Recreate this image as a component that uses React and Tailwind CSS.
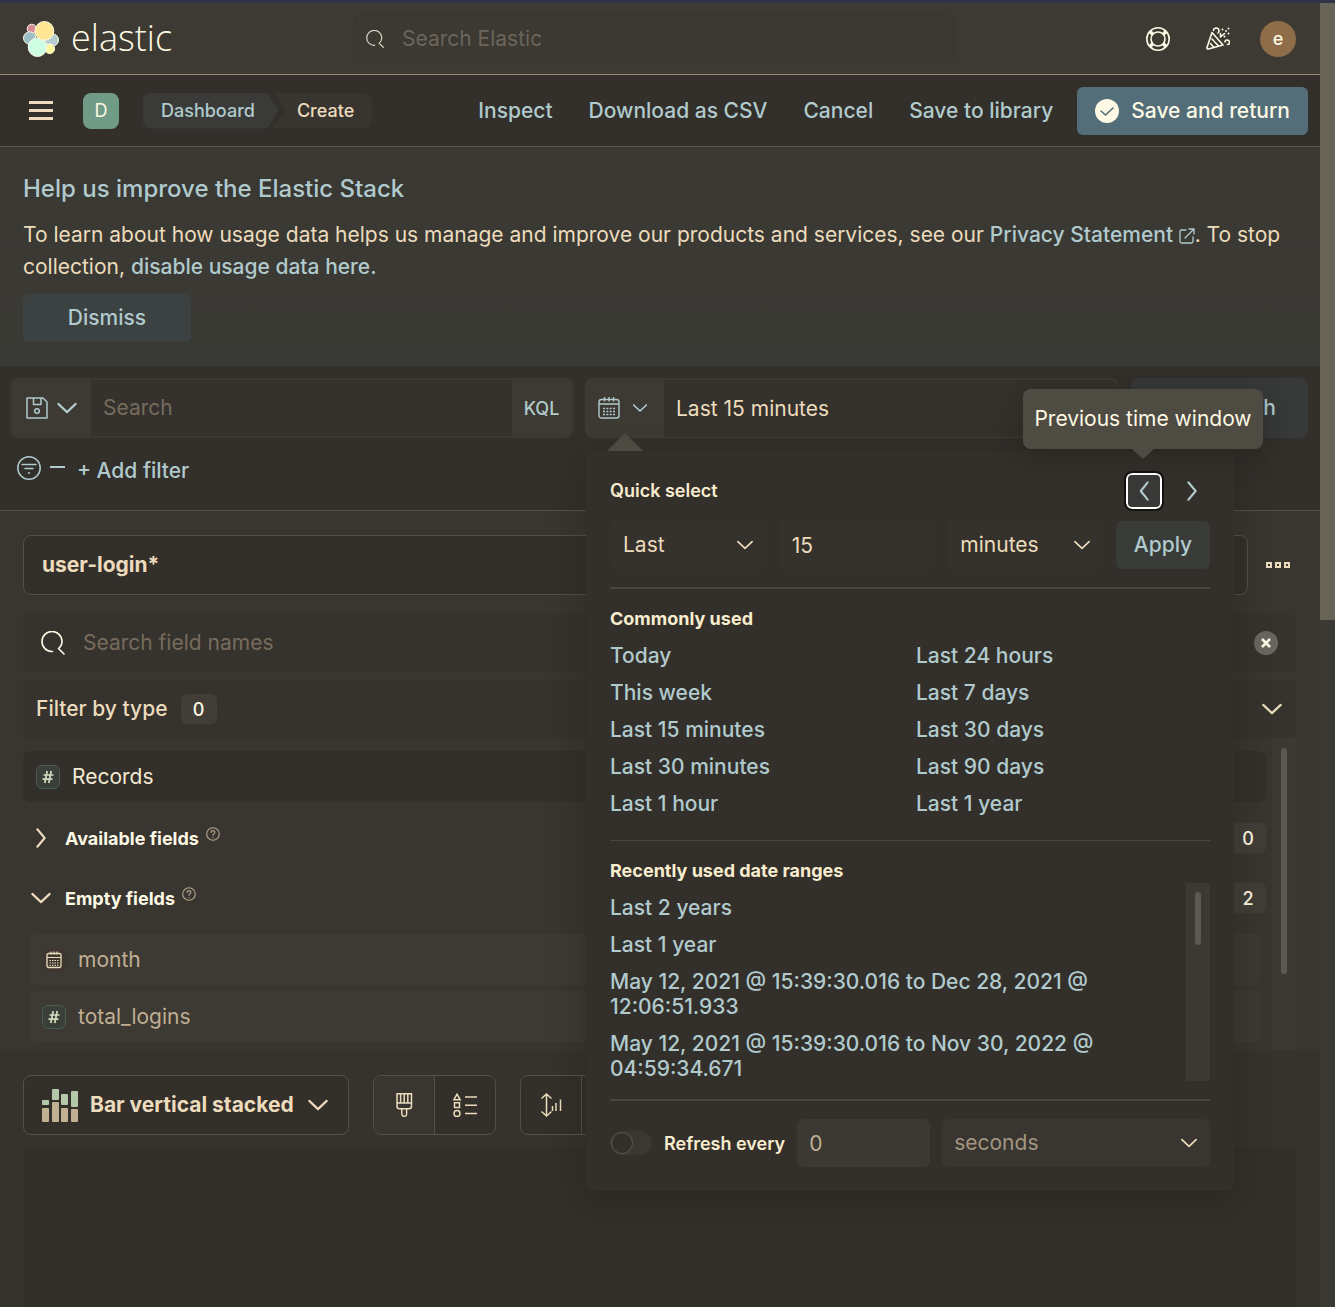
import React from "react";

const INK = "fill-none stroke-current";

function Chevron({ dir = "down", className = "size-4", width = 2.3 }) {
  const d = {
    down: "M2.500 7.500l9.500 9 9.500-9",
    left: "M16 2.500L8.500 12l7.500 9.500",
    right: "M8 2.500l8 9.500-8 9.500",
  }[dir];
  return (
    <svg viewBox="0 0 24 24" className={`${INK} shrink-0 ${className}`} strokeWidth={width} strokeLinecap="round" strokeLinejoin="round" aria-hidden="true">
      <path d={d} />
    </svg>
  );
}

function SearchIcon({ className }) {
  return (
    <svg viewBox="0 0 24 24" className={`${INK} shrink-0 ${className}`} strokeWidth="1.6" strokeLinecap="round" strokeLinejoin="round" aria-hidden="true">
      <path d="M11.500 20.500H11a10 10 0 1 1 10-10c0 3-1 5-3.500 7l5.500 5.500" />
    </svg>
  );
}

function CalendarIcon({ className }) {
  return (
    <svg viewBox="0 0 22 22" className={`${INK} shrink-0 ${className}`} strokeWidth="1.400" aria-hidden="true">
      <rect x="1" y="2.500" width="20" height="18.500" rx="2.500" />
      <path d="M1 7h20M6.500 0v4.500M11 0v4.500M15.500 0v4.500" />
      <path d="M5 11.500h12M5 14.500h12M5 17.500h12" strokeWidth="1.600" strokeDasharray="2 1.330" />
    </svg>
  );
}

function SmallCalendarIcon() {
  return (
    <svg viewBox="0 0 16 18" className={`${INK} h-[18px] w-4`} aria-hidden="true">
      <rect x="1" y="2.500" width="14" height="14" rx="1.500" strokeWidth="1.300" />
      <path d="M1 6.500h14M5 .5v3M8 .5v3M11 .5v3" strokeWidth="1.200" />
      <path d="M3.500 9.500h9M3.500 12h9M3.500 14.300h9" strokeWidth="1" strokeDasharray="1.500 1" />
    </svg>
  );
}

function ElasticMark() {
  return (
    <svg viewBox="0 0 36 36" className="size-9" stroke="#fdf9e4" strokeWidth="1" aria-hidden="true">
      <circle cx="8.800" cy="7.800" r="4.600" fill="#d58b95" />
      <circle cx="6.700" cy="17" r="6.200" fill="#9bbfc5" />
      <circle cx="29.300" cy="19" r="6.200" fill="#b5ccd2" />
      <circle cx="26.800" cy="27.800" r="4.800" fill="#fff79c" />
      <path d="M13 21L19 15l6 5-2 6z" fill="#b5ccd2" stroke="none" />
      <circle cx="14.500" cy="26.200" r="9.300" fill="#cdfde2" />
      <circle cx="21.400" cy="9.900" r="9.400" fill="#ffe694" />
    </svg>
  );
}

function HelpIcon() {
  return (
    <svg viewBox="0 0 24 24" className={`${INK} size-6`} strokeWidth="1.600" aria-hidden="true">
      <circle cx="12" cy="12" r="11.200" />
      <circle cx="12" cy="12" r="7" />
      <path d="M4 4.500l3 3M20 4.500l-3 3M4 19.500l3-3M20 19.500l-3-3" strokeWidth="3.500" />
    </svg>
  );
}

function PartyIcon() {
  return (
    <svg viewBox="0 0 24 24" className={`${INK} size-6`} strokeWidth="1.600" strokeLinecap="round" strokeLinejoin="round" aria-hidden="true">
      <path d="M6 5.500L1 20.500c-.3 1 .5 1.700 1.300 1.500L17 18z" />
      <path d="M6 12l6.500 7M4.500 16.500l3.500 4" />
      <path d="M7.500 3.500c0-3.500 5.500-3.500 5.500.5 0 1-.5 1.500-1 2M14.500 10l4-3.500M14.500 9.500V6.500M19 15c0-3 4.500-2.500 4.500.5 0 1.500-1 2-2 2" />
      <path d="M16.500 2.500v.1M20 4v.1M22.500 1.500v.1M22.500 6.500v.1M18.500 9.500v.1" strokeWidth="1.900" />
    </svg>
  );
}

function QuestionIcon() {
  return (
    <svg viewBox="0 0 16 16" className={`${INK} mb-2 size-3.5 text-[#b5a58c]`} strokeWidth="1.300" strokeLinecap="round" aria-hidden="true">
      <circle cx="8" cy="8" r="7.200" />
      <path d="M5.800 6.200C5.800 3.300 10.300 3.500 10.200 6.200 10.100 7.500 8 7.800 8 9.500M8 12v.2" />
    </svg>
  );
}

function NumberToken() {
  return (
    <span className="flex size-6 items-center justify-center rounded-md border border-[#4b5c51] bg-[#3a4039]">
      <svg viewBox="0 0 12 14" className={`${INK} h-3.5 w-3 text-[#cfdcbe]`} strokeWidth="1.700" aria-hidden="true">
        <path d="M5.200 1L2.800 13M9.200 1L6.800 13M1.500 5h10M.5 9.200h10" />
      </svg>
    </span>
  );
}

function StackedBarsIcon() {
  const cols = [
    [0, 11, 5, 19, 14],
    [10, 0, 11, 13, 20],
    [19, 5, 11, 19, 14],
    [29, 2, 16, 20, 13],
  ];
  return (
    <svg viewBox="0 0 36 33" className="h-[33px] w-9" aria-hidden="true">
      {cols.map(([x, y, h, y2, h2]) => (
        <g key={x}>
          <rect x={x} y={y} width="7" height={h} rx="1" fill="#b3c7a9" />
          <rect x={x} y={y2} width="7" height={h2} rx="1" fill="#c2b093" />
        </g>
      ))}
    </svg>
  );
}

function Header() {
  return (
    <header className="flex h-[72px] items-center border-b border-[#9c8a70] bg-[#3d3933] pl-[23px] pr-6">
      <a href="#home" className="flex w-[331px] shrink-0 items-center gap-3" aria-label="elastic">
        <ElasticMark />
        <span className="pb-0.5 font-['Open_Sans',sans-serif] text-[36px] font-light leading-9 text-[#fdf9e4]">elastic</span>
      </a>
      <label className="flex h-12 w-[600px] shrink-0 items-center rounded-md border border-[#393631] bg-[#3c3832] pl-[11px]">
        <SearchIcon className="size-[18px] text-[#d8d2c0]" />
        <input aria-label="Search Elastic" placeholder="Search Elastic" className="ml-[18px] min-w-0 flex-1 bg-transparent text-[21px] outline-none placeholder:text-[#6b655a]" />
      </label>
      <div className="ml-auto flex items-center text-[#fdf9e4]">
        <button className="mr-9" aria-label="Help"><HelpIcon /></button>
        <button className="mr-[30px]" aria-label="What's new"><PartyIcon /></button>
        <button className="size-9 rounded-full bg-[#8e6d48] text-[18px] font-medium leading-9">e</button>
      </div>
    </header>
  );
}

function NavBar() {
  return (
    <nav className="flex h-[72px] items-center border-b border-[#5c574f] bg-[#332f2a] pl-[29px] pr-3">
      <button aria-label="Menu" className="flex w-6 flex-col gap-[5px]">
        <span className="h-[3px] bg-[#ecdcbd]" />
        <span className="h-[3px] bg-[#ecdcbd]" />
        <span className="h-[3px] bg-[#ecdcbd]" />
      </button>
      <button className="ml-[30px] size-9 rounded-lg bg-[#6f9b87] text-[18px] text-[#fdf9e4]">D</button>
      <ol className="ml-6 flex text-[18px] font-medium leading-9">
        <li className="rounded-l-lg bg-[#3a3b39] pl-[18px] pr-6 text-[#b0cacd] [clip-path:polygon(0_0,calc(100%_-_12px)_0,100%_50%,calc(100%_-_12px)_100%,0_100%)]">
          <a href="#dashboard">Dashboard</a>
        </li>
        <li className="-ml-1.5 rounded-r-lg bg-[#38342f] pl-6 pr-[18px] text-[#ecdcbd] [clip-path:polygon(0_0,100%_0,100%_100%,0_100%,12px_50%)]">Create</li>
      </ol>
      <div className="ml-auto flex items-center gap-9 text-[21px] font-medium text-[#b0cacd]">
        <a href="#inspect">Inspect</a>
        <a href="#csv">Download as CSV</a>
        <a href="#cancel">Cancel</a>
        <a href="#library">Save to library</a>
        <button className="-ml-3 flex h-12 items-center gap-3 rounded-md bg-[#536d79] px-[18px] text-[#fdf9e4]">
          <svg viewBox="0 0 24 24" className="size-6" aria-hidden="true">
            <circle cx="12" cy="12" r="12" fill="#fdf9e4" />
            <path d="M6 12l4.500 4L18 9" fill="none" stroke="#536d79" strokeWidth="1.600" strokeLinecap="round" />
          </svg>
          Save and return
        </button>
      </div>
    </nav>
  );
}

function Notice() {
  return (
    <section className="flex flex-col items-start bg-gradient-to-b from-[#3a3833] via-[#3b3934] to-[#3a3a35] px-[23px] pb-6 pt-[25px]">
      <h2 className="text-[24px] font-medium leading-[34px] text-[#b0cacd]">Help us improve the Elastic Stack</h2>
      <p className="mt-[13px] text-[21px] leading-8 text-[#ecdcbd]">
        To learn about how usage data helps us manage and improve our products and services, see our{" "}
        <a href="#privacy" className="whitespace-nowrap font-medium text-[#b0cacd]">
          Privacy Statement{" "}
          <svg viewBox="0 0 16 16" className={`${INK} inline size-4`} strokeWidth="1.300" strokeLinecap="round" aria-hidden="true">
            <path d="M7 2H2.500Q1 2 1 3.500v10Q1 15 2.500 15h10q1.500 0 1.500-1.500V9M10 1h5v5M15 1L6 10" />
          </svg>
        </a>
        . To stop collection, <a href="#usage" className="font-medium text-[#b0cacd]">disable usage data here.</a>
      </p>
      <button className="mt-[11px] h-12 w-[168px] rounded-md bg-[#3c4141] text-[21px] font-medium text-[#b0cacd]">Dismiss</button>
    </section>
  );
}

function QueryBar() {
  return (
    <section className="h-[145px] border-b border-[#53504b] bg-[#332f2a] pl-[11px] pr-3 pt-3">
      <div className="flex gap-3">
        <div className="flex h-[60px] min-w-0 flex-1 overflow-hidden rounded-lg bg-[#3d3933] text-[#b0cacd]">
          <button className="flex w-20 shrink-0 items-center justify-center gap-2 pl-0.5" aria-label="Saved queries">
            <svg viewBox="0 0 22 22" className={`${INK} size-[22px]`} strokeWidth="1.500" strokeLinejoin="round" aria-hidden="true">
              <path d="M1 1h16l4 4v16H1zM7.500 1v6.500H15V1" />
              <circle cx="11" cy="14" r="2.300" />
            </svg>
            <Chevron className="size-[22px]" />
          </button>
          <input aria-label="Search" placeholder="Search" className="mb-0.5 mt-0.5 min-w-0 flex-1 bg-[#35312c] px-3 text-[21px] outline-none placeholder:text-[#766c5d]" />
          <button className="w-[61px] shrink-0 pr-0.5 text-[18px] font-medium">KQL</button>
        </div>
        <div className="flex h-[60px] w-[534px] overflow-hidden rounded-lg bg-[#3d3933]">
          <button className="flex w-[79px] shrink-0 items-center justify-center gap-3 pr-1 text-[#b0cacd]" aria-label="Date quick select">
            <CalendarIcon className="size-[22px]" />
            <Chevron className="size-4" width={2.5} />
          </button>
          <button className="mb-px mr-px mt-0.5 flex-1 rounded-r-lg bg-[#35312c] px-3 text-left text-[21px] text-[#ecdcbd]">Last 15 minutes</button>
        </div>
        <button className="flex h-[60px] w-[177px] items-center justify-end gap-3 rounded-lg bg-[#373a39] pr-8 text-[21px] font-medium text-[#b0cacd]">Refresh</button>
      </div>
      <div className="mt-[14px] flex h-9 items-center text-[21px] font-medium text-[#b0cacd]">
        <button aria-label="Filter options" className="ml-1.5 pb-1">
          <svg viewBox="0 0 24 24" className={`${INK} size-6`} strokeWidth="1.500" strokeLinecap="round" aria-hidden="true">
            <circle cx="12" cy="12" r="11.200" />
            <path d="M5 8.500h14M8 12.500h8M11.500 17h1" />
          </svg>
        </button>
        <span className="mb-1.5 ml-[9px] h-0.5 w-[15px] bg-[#b0cacd]" />
        <button className="ml-3 pt-0.5">+ Add filter</button>
      </div>
    </section>
  );
}

function Count({ children }) {
  return <span className="flex h-[30px] w-9 items-center justify-center rounded-md bg-[#413e37] text-[18px] font-medium text-[#fdf9e4]">{children}</span>;
}

function FieldPanel() {
  return (
    <section className="bg-[#393530] pl-[23px] pr-6 pt-6">
      <div className="flex items-center">
        <button className="h-[60px] flex-1 rounded-lg border border-[#53504b] bg-[#332f2a] px-[18px] text-left text-[21px] font-bold text-[#ecdcbd]">user-login*</button>
        <button aria-label="More options" className="ml-[18px] mr-[6px] flex gap-[3px]">
          {[0, 1, 2].map((i) => (
            <span key={i} className="size-[6px] border-2 border-[#ecdcbd]" />
          ))}
        </button>
      </div>
      <label className="mt-[19px] flex h-[58px] items-center rounded-lg bg-[#36322d] px-[18px]">
        <SearchIcon className="size-6 text-[#fdf9e4]" />
        <input aria-label="Search field names" placeholder="Search field names" className="ml-[18px] min-w-0 flex-1 bg-transparent text-[21px] outline-none placeholder:text-[#766c5d]" />
        <button aria-label="Clear" className="flex size-6 items-center justify-center rounded-full bg-[#696660]">
          <svg viewBox="0 0 10 10" className={`${INK} size-2.5 text-[#fdf9e4]`} strokeWidth="2.500" aria-hidden="true"><path d="M1 1l8 8M9 1L1 9" /></svg>
        </button>
      </label>
      <button className="mt-2 flex h-[58px] w-full items-center rounded-lg bg-[#36322d] px-[13px] text-[21px] font-medium text-[#ecdcbd]">
        <span className="mr-[13px]">Filter by type</span>
        <Count>0</Count>
        <Chevron className="ml-auto size-[22px]" />
      </button>
      <div className="flex">
        <div className="min-w-0 flex-1 pb-2 pr-1.5 pt-[13px] text-[21px]">
          <div className="flex h-[51px] items-center gap-3 rounded-lg bg-[#332f2a] px-[13px] text-[#f3ead2]"><NumberToken />Records</div>
          <button className="mt-1.5 flex h-[60px] w-full items-center pl-[7px] text-[18px] font-bold text-[#fdf9e4]">
            <Chevron dir="right" className="mr-[13px] size-[22px] text-[#ecdcbd]" />
            <span className="mr-[7px]">Available fields</span><QuestionIcon />
            <span className="ml-auto"><Count>0</Count></span>
          </button>
          <button className="flex h-[60px] w-full items-center pl-[7px] text-[18px] font-bold text-[#fdf9e4]">
            <Chevron className="mr-[13px] size-[22px] text-[#ecdcbd]" />
            <span className="mr-[7px]">Empty fields</span><QuestionIcon />
            <span className="ml-auto"><Count>2</Count></span>
          </button>
          <div className="mx-1.5 mt-1.5 flex flex-col gap-1.5 text-[#c0af94]">
            <div className="flex h-[51px] items-center gap-3 rounded-lg bg-[#3d3933] px-[13px]">
              <span className="flex size-6 items-center justify-center rounded-md bg-[#3f372f] text-[#ecdcbd]"><SmallCalendarIcon /></span>month
            </div>
            <div className="flex h-[51px] items-center gap-3 rounded-lg bg-[#3d3933] px-[13px]"><NumberToken />total_logins</div>
          </div>
        </div>
        <div className="w-6 bg-[#3b3934] px-[9px] pt-2.5"><div className="h-[226px] rounded-full bg-[#5d5850]" /></div>
      </div>
    </section>
  );
}

function ChartPanel() {
  return (
    <section className="flex flex-1 flex-col bg-[#36322d] px-[23px] pt-[25px]">
      <div className="flex gap-6 text-[#ecdcbd]">
        <button className="flex h-[60px] items-center rounded-lg border border-[#53504b] bg-[#332f2a] pl-[18px] pr-[19px] text-[21px] font-bold">
          <StackedBarsIcon />
          <span className="ml-3 mr-[13px]">Bar vertical stacked</span>
          <Chevron className="size-[22px]" />
        </button>
        <div className="flex h-[60px] overflow-hidden rounded-lg border border-[#53504b] bg-[#332f2a]">
          <button aria-label="Appearance" className="flex w-[60px] items-center justify-center bg-[#393530]">
            <svg viewBox="0 0 24 24" className={`${INK} size-6`} strokeWidth="1.500" aria-hidden="true">
              <path d="M5 .8h14.500v12.500q0 2.500-2.500 2.500H7.500Q5 15.800 5 13.300zM5 10h14.500M8.600 1v9M12.200 1v9M15.800 1v9M9.800 16v5q0 2.300 2.400 2.300t2.400-2.300v-5" />
            </svg>
          </button>
          <button aria-label="Legend" className="flex w-[61px] items-center justify-center border-l border-[#53504b]">
            <svg viewBox="0 0 24 24" className={`${INK} size-6`} strokeWidth="1.500" aria-hidden="true">
              <path d="M.8 6.800L4 1.200l3.200 5.600zM1.500 9.800h5v4.800h-5zM12 4h12M12 12.200h12M12 20.500h12" />
              <circle cx="4" cy="20.500" r="3" />
            </svg>
          </button>
        </div>
        <div className="flex h-[60px] overflow-hidden rounded-lg border border-[#53504b] bg-[#332f2a]">
          <button aria-label="Left axis" className="flex w-[60px] items-center justify-center">
            <svg viewBox="0 0 24 24" className={`${INK} size-6`} strokeWidth="1.500" aria-hidden="true">
              <path d="M7.500 1v22M2.500 5.500l5-4.500 5 4.500M2.500 18.500l5 4.500 5-4.500M13.500 18v-5M17 18v-8M21.500 18V6.500" />
            </svg>
          </button>
          <span className="w-[61px] border-l border-[#53504b]" />
        </div>
      </div>
      <div className="mt-3 flex-1 rounded-t-lg bg-[#332f2a]" />
    </section>
  );
}

function SelectBox({ label, value, className, tone = "text-[#ecdcbd]" }) {
  return (
    <div className={`relative flex h-12 items-center rounded-md ${className}`}>
      <select aria-label={label} className={`h-full w-full appearance-none bg-transparent px-3 text-[21px] outline-none ${tone}`}>
        <option>{value}</option>
      </select>
      <Chevron className="pointer-events-none absolute right-3 size-[18px] text-[#ecdcbd]" width={2.3} />
    </div>
  );
}

const commonRanges = [
  ["Today", "Last 24 hours"],
  ["This week", "Last 7 days"],
  ["Last 15 minutes", "Last 30 days"],
  ["Last 30 minutes", "Last 90 days"],
  ["Last 1 hour", "Last 1 year"],
];

const recentRanges = [
  "Last 2 years",
  "Last 1 year",
  "May 12, 2021 @ 15:39:30.016 to Dec 28, 2021 @ 12:06:51.933",
  "May 12, 2021 @ 15:39:30.016 to Nov 30, 2022 @ 04:59:34.671",
];

function TimePopover() {
  return (
    <div role="dialog" aria-label="Quick select" className="absolute right-[86px] top-[451px] w-[648px] rounded-b-lg bg-[#332f2a] px-6 pb-6 pt-[22px] shadow-[0_12px_36px_rgba(20,16,12,0.25)]">
      <svg viewBox="0 0 36 18" className="absolute -top-[18px] left-[21px] h-[18px] w-9 fill-[#4d4a42]" aria-hidden="true"><path d="M18 0l18 18H0z" /></svg>
      <div className="flex h-9 items-center">
        <h3 className="pb-0.5 text-[18px] font-semibold text-[#f8edcf]">Quick select</h3>
        <button aria-label="Previous time window" className="ml-auto flex size-9 items-center justify-center rounded-md border-2 border-white bg-[#393a38] text-[#b0cacd] outline-2 outline-[#14120f]"><Chevron dir="left" className="size-[22px]" /></button>
        <button aria-label="Next time window" className="ml-3 flex size-9 items-center justify-center text-[#b0cacd]"><Chevron dir="right" className="size-[22px]" /></button>
      </div>
      <div className="mt-3 grid grid-cols-[1fr_1fr_1fr_94px] gap-3">
        <SelectBox label="Time tense" value="Last" className="border border-[#36322d] bg-[#35312c]" />
        <input aria-label="Time value" defaultValue="15" className="h-12 min-w-0 rounded-md border border-[#36322d] bg-[#35312c] px-3 text-[21px] text-[#ecdcbd] outline-none" />
        <SelectBox label="Time unit" value="minutes" className="border border-[#36322d] bg-[#35312c]" />
        <button className="h-12 rounded-md bg-[#393b39] text-[21px] font-medium text-[#b0cacd]">Apply</button>
      </div>
      <hr className="mt-[18px] border-t-2 border-[#494540]" />
      <h3 className="mt-[18px] text-[18px] font-bold leading-6 text-[#f8edcf]">Commonly used</h3>
      <ul className="mt-3 flex flex-col gap-3 text-[21px] font-medium leading-[25px] text-[#b0cacd]">
        {commonRanges.map(([a, b]) => (
          <li key={a} className="grid grid-cols-[306px_1fr]">
            <a href="#range">{a}</a>
            <a href="#range">{b}</a>
          </li>
        ))}
      </ul>
      <hr className="mt-6 border-t border-[#494540]" />
      <h3 className="mt-[18px] text-[18px] font-bold leading-6 text-[#f8edcf]">Recently used date ranges</h3>
      <div className="flex">
        <ul className="mt-3 flex min-w-0 flex-1 flex-col gap-3 pr-12 text-[21px] font-medium leading-[25px] text-[#b0cacd]">
          {recentRanges.map((r) => (
            <li key={r}><a href="#range">{r}</a></li>
          ))}
        </ul>
        <div className="w-6 bg-[#3b3934] px-[9px] pt-[9px]"><div className="h-[53px] rounded-full bg-[#5d5850]" /></div>
      </div>
      <hr className="mt-[18px] border-t-2 border-[#494540]" />
      <div className="mt-[18px] flex items-center">
        <label className="flex items-center text-[18px] font-semibold text-[#f8edcf]">
          <input type="checkbox" role="switch" className="mr-3 flex h-6 w-[42px] appearance-none items-center rounded-full bg-[#3b3731] pl-px before:block before:size-[22px] before:rounded-full before:border before:border-[#5d5850] before:bg-[#332f2a]" />
          Refresh every
        </label>
        <input aria-label="Refresh interval" defaultValue="0" className="ml-3 h-12 w-[133px] rounded-md bg-[#3b3934] px-3 text-[21px] text-[#c0af94] outline-none" />
        <SelectBox label="Refresh unit" value="seconds" className="ml-3 flex-1 bg-[#393530]" tone="text-[#a39681]" />
      </div>
    </div>
  );
}

function Tooltip() {
  return (
    <div role="tooltip" className="absolute right-[57px] top-[389px] flex h-[60px] w-60 items-center justify-center rounded-lg bg-[#4e4b42] text-[21px] text-[#fdf9e4] shadow-[0_6px_30px_rgba(20,16,12,0.3)]">
      Previous time window
      <svg viewBox="0 0 22 10" className="absolute top-full h-2.5 w-[22px] fill-[#4e4b42]" aria-hidden="true"><path d="M0 0h22L11 10z" /></svg>
    </div>
  );
}

export default function App() {
  return (
    <div className="min-h-screen overflow-hidden border-t-[3px] border-[#303446] bg-[#36322d] font-[Inter,sans-serif]">
      <div className="flex min-h-[1304px]">
        <main className="relative -mt-[3px] flex min-w-0 flex-1 flex-col pt-[3px]">
          <Header />
          <NavBar />
          <Notice />
          <QueryBar />
          <FieldPanel />
          <ChartPanel />
          <TimePopover />
          <Tooltip />
        </main>
        <div className="w-[15px] shrink-0 bg-[#3b3934]"><div className="h-[617px] bg-[#696458]" /></div>
      </div>
    </div>
  );
}
